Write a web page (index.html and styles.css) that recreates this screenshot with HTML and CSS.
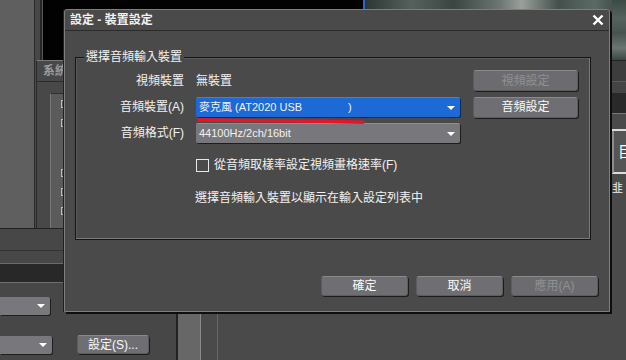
FILE: index.html
```html
<!DOCTYPE html>
<html lang="zh-Hant">
<head>
  <meta charset="UTF-8">
  <title>設定 - 裝置設定</title>
  <link rel="stylesheet" href="styles.css">
</head>
<body>
  <div class="desk">
    <!-- background windows -->
    <div class="left-strip"></div>
    <div class="left-rail"></div>
    <div class="black-pane"></div>
    <div class="blue-edge"></div>
    <div class="photo-top"></div>
    <div class="photo-right"></div>

    <div class="sys-window">
      <div class="sys-title">系統設定</div>
      <div class="sys-tree">
        <span class="node"></span>
        <span class="node"></span>
        <span class="node gap"></span>
        <span class="node"></span>
        <span class="node"></span>
      </div>
    </div>

    <div class="lower-left">
      <div class="band light"></div>
      <div class="band mid"></div>
      <div class="band dark"></div>
      <div class="ll-row">
        <div class="mini-select"><i class="arrow"></i></div>
      </div>
      <div class="ll-row second">
        <div class="mini-select wider"><i class="arrow"></i></div>
        <button class="btn setup">設定(S)...</button>
      </div>
    </div>

    <div class="lower-cols">
      <div class="col-a"></div>
      <div class="col-b"></div>
    </div>

    <div class="right-panel">
      <div class="rp-head"></div>
      <div class="rp-sub"></div>
      <div class="rp-dark"></div>
      <div class="rp-gap"></div>
      <div class="rp-box">目</div>
      <div class="rp-text">韭 <span>ブ</span></div>
    </div>

    <!-- dialog -->
    <div class="dialog">
      <div class="dlg-title">
        <span>設定 - 裝置設定</span>
        <svg class="close" width="12" height="12" viewBox="0 0 12 12">
          <path d="M1.5 1.5 L10.5 10.5 M10.5 1.5 L1.5 10.5" stroke="#fff" stroke-width="2.4" fill="none"/>
        </svg>
      </div>

      <div class="group">
        <span class="legend">選擇音頻輸入裝置</span>
        <div class="grid">
          <div class="lbl">視頻裝置</div>
          <div class="val">無裝置</div>
          <button class="btn side disabled">視頻設定</button>

          <div class="lbl">音頻裝置(A)</div>
          <div class="select blue"><span class="sel-text">麥克風 (AT2020 USB               )</span><i class="arrow"></i></div>
          <button class="btn side">音頻設定</button>

          <div class="lbl">音頻格式(F)</div>
          <div class="select"><span class="sel-text">44100Hz/2ch/16bit</span><i class="arrow"></i></div>
        </div>
        <div class="check"><span class="box"></span>從音頻取樣率設定視頻畫格速率(F)</div>
        <p class="hint">選擇音頻輸入裝置以顯示在輸入設定列表中</p>
      </div>

      <div class="actions">
        <button class="btn wide">確定</button>
        <button class="btn wide">取消</button>
        <button class="btn wide disabled">應用(A)</button>
      </div>
    </div>

    <svg class="ink" width="172" height="10" viewBox="0 0 172 10">
      <path d="M3 3.8 L26 4.3 L130 5.3 L167 6.3" stroke="#e3172b" stroke-width="3.4" stroke-linecap="round" fill="none"/>
    </svg>
  </div>
</body>
</html>
```

FILE: styles.css
```css
body {
  margin: 0;
  background: #4a4a4a;
  font: 12px "Liberation Sans", "Noto Sans CJK TC", sans-serif;
  color: #f2f2f2;
}
.desk {
  position: relative;
  width: 626px;
  height: 360px;
  overflow: hidden;
  background: #4a4a4a;
}

/* background windows */
.left-strip {
  position: absolute;
  left: 0;
  top: 0;
  width: 34px;
  height: 228px;
  background: #5f5f5f;
  border-right: 1px solid #2a2a2a;
}
.left-rail {
  position: absolute;
  left: 35px;
  top: 0;
  width: 5px;
  height: 60px;
  background: #474747;
  border-right: 2px solid #262626;
}
.black-pane {
  position: absolute;
  left: 42px;
  top: 0;
  width: 321px;
  height: 60px;
  background: #020202;
  border-left: 1px solid #555;
}
.blue-edge {
  position: absolute;
  left: 363px;
  top: 0;
  width: 2px;
  height: 10px;
  background: #2f64d6;
}
.photo-top {
  position: absolute;
  left: 365px;
  top: 0;
  width: 261px;
  height: 10px;
  background: linear-gradient(90deg, #2c3632, #56605d 18%, #3a4440 34%, #6f7774 52%, #9aa09c 60%, #45504b 74%, #5d6a64 88%, #34403b);
}
.photo-right {
  position: absolute;
  left: 612px;
  top: 0;
  width: 14px;
  height: 60px;
  background: linear-gradient(180deg, #3b4b44, #55625d 30%, #46534e 55%, #6b7571 80%, #3c4642);
}

.sys-window {
  position: absolute;
  left: 36px;
  top: 60px;
  width: 60px;
  height: 168px;
  background: #484848;
  border-top: 1px solid #7a7a7a;
  border-left: 1px solid #2a2a2a;
}
.sys-title {
  height: 20px;
  padding-left: 6px;
  line-height: 20px;
  font-weight: bold;
  color: #9a9a9a;
  border-bottom: 1px solid #2a2a2a;
  white-space: nowrap;
}
.sys-tree {
  display: flex;
  flex-direction: column;
  margin: 11px 0 0 13px;
  padding: 6px 0 0 10px;
  height: 130px;
  background: #5b5b5b;
  border-left: 1px solid #777;
  border-top: 1px solid #2e2e2e;
}
.node {
  width: 6px;
  height: 6px;
  margin-bottom: 11px;
  border: 1px solid #bdbdbd;
}
.node.gap {
  margin-top: 31px;
}

.lower-left {
  position: absolute;
  left: 0;
  top: 228px;
  width: 176px;
  height: 132px;
  background: #474747;
  border-top: 1px solid #232323;
  border-right: 2px solid #232323;
}
.band.light {
  height: 21px;
  border-bottom: 1px solid #333;
}
.band.mid {
  height: 12px;
  border-bottom: 1px solid #6a6a6a;
}
.band.dark {
  height: 18px;
  background: #282828;
  border-bottom: 1px solid #6e6e6e;
}
.ll-row {
  display: flex;
  align-items: center;
  gap: 25px;
  margin-top: 14px;
}
.ll-row.second {
  margin-top: 20px;
}
.mini-select {
  position: relative;
  width: 50px;
  height: 18px;
  background: #78777b;
  border-radius: 0 2px 2px 0;
  box-shadow: 1px 1px 0 #1f1f1f;
}
.mini-select.wider {
  width: 52px;
}
.btn.setup {
  width: 72px;
  height: 19px;
}

.lower-cols {
  position: absolute;
  left: 176px;
  top: 314px;
  display: flex;
  height: 46px;
}
.col-a {
  width: 22px;
  background: #676767;
  border-left: 2px solid #222;
  border-right: 1px solid #8a8a8a;
}
.col-b {
  width: 16px;
  border-right: 1px solid #666;
}

.right-panel {
  position: absolute;
  left: 612px;
  top: 60px;
  width: 14px;
  height: 300px;
  display: flex;
  flex-direction: column;
}
.rp-head {
  height: 20px;
  background: #3d3d3d;
  border-top: 1px solid #222;
  border-bottom: 1px solid #5a5a5a;
}
.rp-sub {
  height: 11px;
  background: #444;
}
.rp-dark {
  height: 20px;
  background: #292929;
  border-bottom: 1px solid #777;
}
.rp-gap {
  height: 15px;
  border-bottom: 2px solid #dcdcdc;
}
.rp-box {
  height: 41px;
  padding-left: 4px;
  background: #555;
  border-left: 2px solid #8c8c8c;
  border-bottom: 2px solid #dcdcdc;
  font-size: 15px;
  line-height: 41px;
  color: #fff;
  overflow: hidden;
}
.rp-text {
  margin-top: 5px;
  font-size: 11px;
  white-space: nowrap;
}
.rp-text span {
  color: #8fb7ff;
}

/* dialog */
.dialog {
  position: absolute;
  left: 64px;
  top: 9px;
  width: 546px;
  height: 303px;
  box-sizing: border-box;
  display: flex;
  flex-direction: column;
  background: #4a4a4a;
  border: 1px solid #7e7e7e;
  border-radius: 3px 3px 0 0;
  box-shadow: 2px 2px 0 #0e0e0e, -1px 0 0 #202020;
}
.dlg-title {
  display: flex;
  justify-content: space-between;
  align-items: center;
  height: 20px;
  padding: 0 5px;
  font-weight: bold;
  line-height: 20px;
  border-bottom: 1px solid #2b2b2b;
}
.close {
  margin-right: 0;
}
.group {
  position: relative;
  box-sizing: border-box;
  width: 516px;
  height: 183px;
  margin: 26px 0 0 10px;
  padding-top: 12px;
  border: 1px solid #151515;
  box-shadow: inset -1px -1px 0 #7a7a7a, inset 1px 1px 0 #595959;
}
.legend {
  position: absolute;
  left: 8px;
  top: -8px;
  padding: 0 2px;
  line-height: 14px;
  background: #4a4a4a;
}
.grid {
  display: grid;
  grid-template-columns: 108px 264px 106px;
  grid-template-rows: 21px 20px 20px;
  column-gap: 12px;
  row-gap: 6px;
  align-items: center;
}
.lbl {
  text-align: right;
  line-height: 14px;
}
.val {
  line-height: 14px;
}
.select {
  position: relative;
  height: 20px;
  box-sizing: border-box;
  padding-left: 3px;
  background: #78777b;
  border-top: 1px solid #8e8e92;
  border-radius: 2px;
  box-shadow: 1px 1px 0 #1d1d1d;
  font-size: 11px;
  line-height: 18px;
  white-space: pre;
}
.select.blue {
  background: #1d6ad6;
  border-top-color: #3c82e4;
  box-shadow: 1px 1px 0 #0f2a55;
}
.arrow {
  position: absolute;
  right: 5px;
  top: 8px;
  border-left: 4px solid transparent;
  border-right: 4px solid transparent;
  border-top: 4px solid #fff;
}
.mini-select .arrow {
  top: 7px;
}
.btn {
  box-sizing: border-box;
  padding: 0;
  font: inherit;
  color: #fafafa;
  background: #6f6f73;
  border: 1px solid #5c5c5f;
  border-top-color: #8a8a8d;
  border-radius: 3px;
  box-shadow: 1px 1px 0 #1c1c1c;
  line-height: 16px;
}
.btn.side {
  justify-self: end;
  width: 105px;
  height: 21px;
}
.grid .btn.side:last-child {
  height: 20px;
}
.btn.disabled {
  color: #909090;
  background: #6c6c70;
}
.check {
  display: flex;
  align-items: center;
  gap: 5px;
  margin: 16px 0 0 120px;
  line-height: 13px;
}
.box {
  width: 13px;
  height: 13px;
  box-sizing: border-box;
  border: 1px solid #e8e8e8;
}
.hint {
  margin: 19px 0 0 119px;
  line-height: 14px;
}
.actions {
  display: flex;
  justify-content: flex-end;
  gap: 8px;
  margin-top: 36px;
  padding-right: 11px;
}
.btn.wide {
  width: 87px;
  height: 20px;
}
.ink {
  position: absolute;
  left: 196px;
  top: 116px;
}
```
